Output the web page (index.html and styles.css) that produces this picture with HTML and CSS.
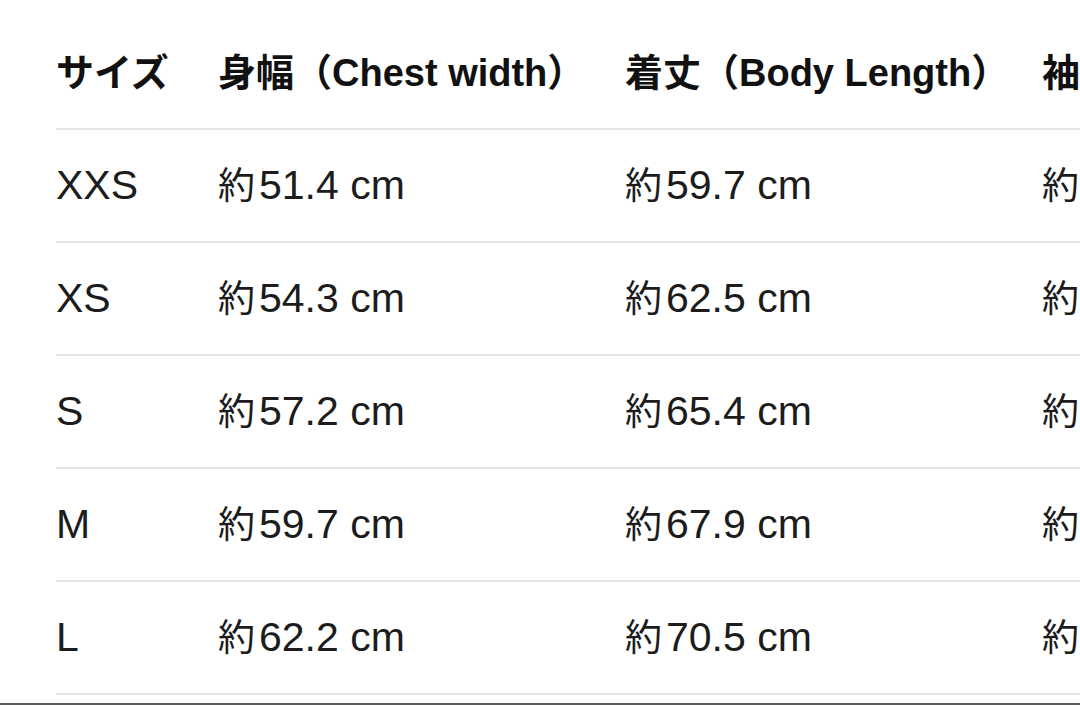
FILE: index.html
```html
<!DOCTYPE html>
<html lang="ja">
<head>
<meta charset="utf-8">
<link rel="stylesheet" href="styles.css">
<title>サイズ表</title>
</head>
<body>
<div class="page">
  <div class="table">
    <div class="row head">
      <div class="cell">サイズ</div>
      <div class="cell">身幅（Chest width）</div>
      <div class="cell">着丈（Body Length）</div>
      <div class="cell">袖丈（Sleeve Length）</div>
    </div>
    <div class="row">
      <div class="cell">XXS</div>
      <div class="cell"><span class="ja">約</span>51.4 cm</div>
      <div class="cell"><span class="ja">約</span>59.7 cm</div>
      <div class="cell"><span class="ja">約</span>19.0 cm</div>
    </div>
    <div class="row">
      <div class="cell">XS</div>
      <div class="cell"><span class="ja">約</span>54.3 cm</div>
      <div class="cell"><span class="ja">約</span>62.5 cm</div>
      <div class="cell"><span class="ja">約</span>19.7 cm</div>
    </div>
    <div class="row">
      <div class="cell">S</div>
      <div class="cell"><span class="ja">約</span>57.2 cm</div>
      <div class="cell"><span class="ja">約</span>65.4 cm</div>
      <div class="cell"><span class="ja">約</span>20.3 cm</div>
    </div>
    <div class="row">
      <div class="cell">M</div>
      <div class="cell"><span class="ja">約</span>59.7 cm</div>
      <div class="cell"><span class="ja">約</span>67.9 cm</div>
      <div class="cell"><span class="ja">約</span>21.0 cm</div>
    </div>
    <div class="row">
      <div class="cell">L</div>
      <div class="cell"><span class="ja">約</span>62.2 cm</div>
      <div class="cell"><span class="ja">約</span>70.5 cm</div>
      <div class="cell"><span class="ja">約</span>21.6 cm</div>
    </div>
  </div>
  <div class="edge"></div>
</div>
</body>
</html>
```

FILE: styles.css
```css
html, body {
  margin: 0;
  padding: 0;
  background: #ffffff;
  overflow: hidden;
}

.page {
  height: 705px;
  display: flex;
  flex-direction: column;
  overflow: hidden;
}

.table {
  padding-top: 17px;
  padding-left: 56px;
}

.row {
  display: grid;
  grid-template-columns: 162px 407px 417px 400px;
  height: 111px;
  align-items: center;
  border-bottom: 2px solid #e6e6e6;
  width: 1400px;
  font-family: "Liberation Sans", "Noto Sans CJK JP", sans-serif;
  font-size: 41px;
  line-height: 1;
  color: #1c1c1c;
}

.row.head {
  height: 111px;
  font-size: 38px;
  font-weight: bold;
  color: #111111;
}

.cell {
  white-space: nowrap;
}

.ja {
  font-family: "Noto Sans CJK JP", sans-serif;
  font-weight: 400;
  margin-right: 4px;
  font-size: 37px;
}

.edge {
  margin-top: auto;
  height: 2px;
  background: #5c5c5c;
}
```
